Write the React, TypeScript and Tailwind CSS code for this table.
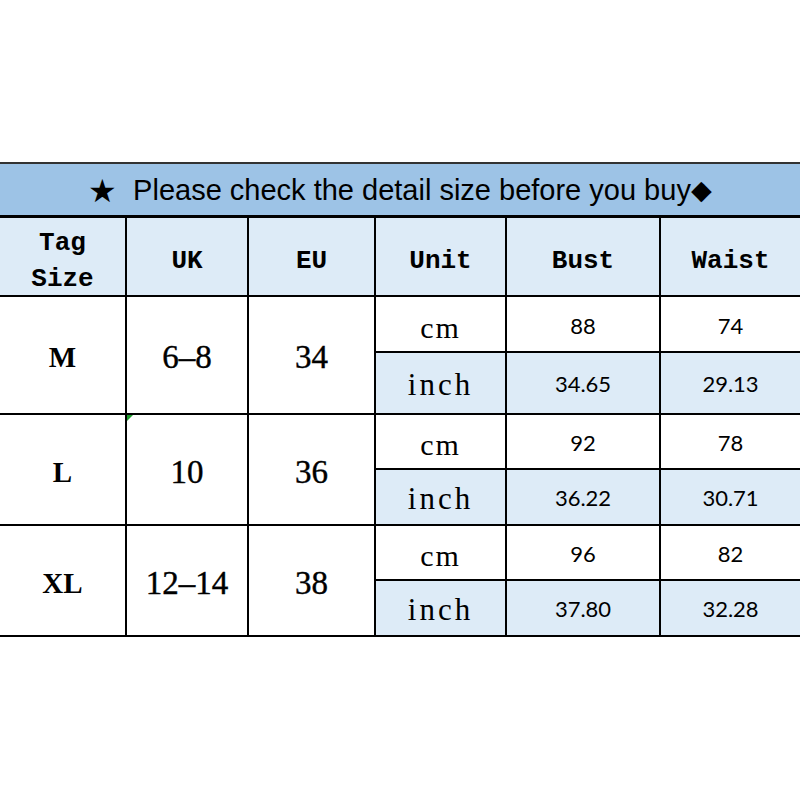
import React from "react";

const MONO = "font-['Liberation_Mono','DejaVu_Sans_Mono',monospace]";
const SERIF = "font-['Liberation_Serif','DejaVu_Serif',serif]";
const SANS = "font-['Lato','Liberation_Sans',sans-serif]";

type Row = {
  tag: string;
  uk: string;
  eu: string;
  cm: [string, string];
  inch: [string, string];
  spanRow: string;
  cmRow: string;
  inchRow: string;
};

const rows: Row[] = [
  { tag: "M", uk: "6–8", eu: "34", cm: ["88", "74"], inch: ["34.65", "29.13"], spanRow: "row-start-2 row-span-2", cmRow: "row-start-2", inchRow: "row-start-3" },
  { tag: "L", uk: "10", eu: "36", cm: ["92", "78"], inch: ["36.22", "30.71"], spanRow: "row-start-4 row-span-2", cmRow: "row-start-4", inchRow: "row-start-5" },
  { tag: "XL", uk: "12–14", eu: "38", cm: ["96", "82"], inch: ["37.80", "32.28"], spanRow: "row-start-6 row-span-2", cmRow: "row-start-6", inchRow: "row-start-7" },
];

const headers = ["Tag\nSize", "UK", "EU", "Unit", "Bust", "Waist"];

export default function App() {
  return (
    <div className="w-[800px] h-[800px] bg-white pt-[162px]">
      <div className="h-[56px] border-t-2 border-b-[3px] border-t-[#333333] border-b-black bg-[#9dc3e6] flex items-center justify-center text-black text-[29px] font-['Liberation_Sans',Arial,sans-serif] pt-[2px]">
        <span className="mr-[16px] text-[32px] leading-none">★</span>
        <span>Please check the detail size before you buy</span>
        <span className="text-[27px] leading-none">◆</span>
      </div>
      <div className="grid grid-cols-[125px_120px_125px_129px_152px_139px] grid-rows-[77px_54px_60px_53px_54px_53px_54px] gap-[2px] bg-black border-b-2 border-black">
        {headers.map((h) => (
          <div
            key={h}
            className={`bg-[#ddebf7] flex items-center justify-center text-center font-bold text-[26px] leading-[36px] whitespace-pre-line text-black pt-[8px] ${MONO}`}
          >
            {h}
          </div>
        ))}
        {rows.map((r, i) => (
          <React.Fragment key={r.tag}>
            <div className={`${r.spanRow} col-start-1 bg-white flex items-center justify-center text-[29px] font-bold text-black pt-[6px] ${SERIF}`}>
              {r.tag}
            </div>
            <div className={`${r.spanRow} col-start-2 bg-white flex items-center justify-center text-[33px] text-black relative pt-[6px] [-webkit-text-stroke:0.4px_black] ${SERIF}`}>
              {i === 1 && (
                <span className="absolute left-0 top-0 w-0 h-0 border-t-[6px] border-r-[6px] border-t-[#1e9e2e] border-r-transparent" />
              )}
              {r.uk}
            </div>
            <div className={`${r.spanRow} col-start-3 bg-white flex items-center justify-center text-[33px] text-black pt-[6px] [-webkit-text-stroke:0.4px_black] ${SERIF}`}>
              {r.eu}
            </div>
            <div className={`${r.cmRow} col-start-4 bg-white flex items-center justify-center text-[30px] tracking-[2px] text-black pt-[6px] ${SERIF}`}>
              cm
            </div>
            <div className={`${r.cmRow} col-start-5 bg-white flex items-center justify-center text-[22px] text-black pt-[2px] ${SANS}`}>
              {r.cm[0]}
            </div>
            <div className={`${r.cmRow} col-start-6 bg-white flex items-center justify-center text-[22px] text-black pt-[2px] ${SANS}`}>
              {r.cm[1]}
            </div>
            <div className={`${r.inchRow} col-start-4 bg-[#ddebf7] flex items-center justify-center text-[31px] tracking-[3px] text-black pt-[4px] ${SERIF}`}>
              inch
            </div>
            <div className={`${r.inchRow} col-start-5 bg-[#ddebf7] flex items-center justify-center text-[22px] text-black ${SANS}`}>
              {r.inch[0]}
            </div>
            <div className={`${r.inchRow} col-start-6 bg-[#ddebf7] flex items-center justify-center text-[22px] text-black ${SANS}`}>
              {r.inch[1]}
            </div>
          </React.Fragment>
        ))}
      </div>
    </div>
  );
}
